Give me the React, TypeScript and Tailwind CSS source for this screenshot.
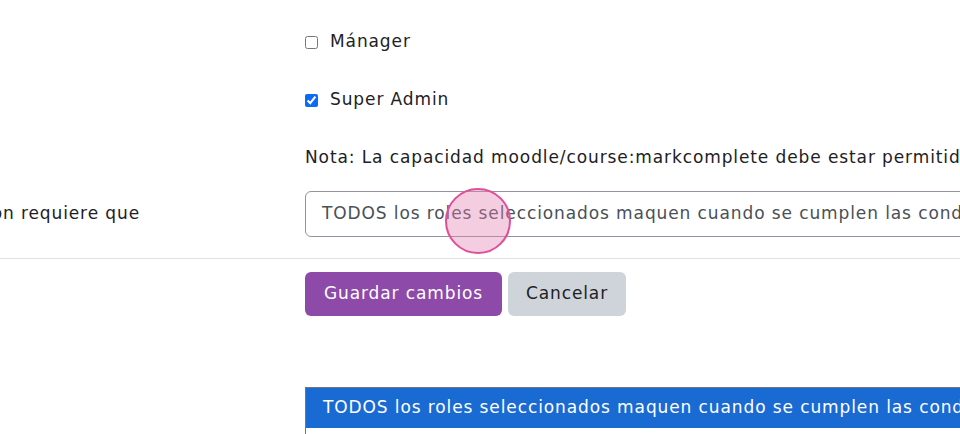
import React from 'react';

const FONT = "font-['DejaVu_Sans',_'Noto_Sans',_sans-serif] tracking-[0.056em]";

const CheckRow: React.FC<{ label: string; checked?: boolean }> = ({ label, checked }) => (
  <label className="flex h-[24px] items-center gap-[12px] text-[17px] text-[#1d2125]">
    <input
      type="checkbox"
      defaultChecked={checked}
      className="h-[13px] w-[13px] accent-[#0b6bf7]"
    />
    <span>{label}</span>
  </label>
);

const App: React.FC = () => {
  const option = 'TODOS los roles seleccionados maquen cuando se cumplen las condiciones';

  return (
    <div className={`relative h-[434px] w-[960px] overflow-hidden bg-white ${FONT}`}>
      {/* role checkboxes */}
      <div className="flex">
        <div className="w-[305px] shrink-0" />
        <div className="flex min-w-0 flex-1 flex-col gap-[34px] pt-[30px]">
          <CheckRow label="Mánager" />
          <CheckRow label="Super Admin" checked />
          <p className="-mt-[1px] h-[24px] whitespace-nowrap text-[17px] leading-[24px] text-[#1d2125]">
            Nota: La capacidad moodle/course:markcomplete debe estar permitida en estos roles
          </p>
        </div>
      </div>

      {/* completion condition select */}
      <div className="mt-[22px] flex items-center">
        <div className="flex w-[305px] shrink-0 items-center">
          <div className="flex w-[140px] justify-end overflow-hidden">
            <span className="whitespace-nowrap text-[17px] text-[#1d2125]">La condición requiere que</span>
          </div>
        </div>
        <div className="min-w-0 flex-1">
          <div className="flex h-[46px] w-[760px] items-center rounded-[6px] border border-[#8f959e] pl-[16px]">
            <span className="whitespace-nowrap text-[17px] text-[#495057]">{option}</span>
          </div>
        </div>
      </div>

      <div className="mt-[21px] border-t border-[#dee2e6]" />

      {/* buttons */}
      <div className="flex pt-[13px]">
        <div className="w-[305px] shrink-0" />
        <div className="flex gap-[6px]">
          <button className="h-[44px] w-[197px] rounded-[6px] bg-[#8e4aa8] text-[17px] text-white">
            Guardar cambios
          </button>
          <button className="h-[44px] w-[118px] rounded-[6px] bg-[#ced4da] text-[17px] text-[#1d2125]">
            Cancelar
          </button>
        </div>
      </div>

      {/* open select list */}
      <div className="mt-[71px] flex">
        <div className="w-[305px] shrink-0" />
        <div className="h-[60px] min-w-0 flex-1 border-l border-t border-[#767676]">
          <div className="flex h-[40px] items-center bg-[#1a6ad4] pl-[17px]">
            <span className="whitespace-nowrap text-[17px] text-white">{option}</span>
          </div>
        </div>
      </div>

      {/* cursor highlight */}
      <div className="absolute left-[445px] top-[188px] h-[66px] w-[66px] rounded-full border-2 border-[#df4f97] bg-[#e783b4]/40" />
    </div>
  );
};

export default App;
